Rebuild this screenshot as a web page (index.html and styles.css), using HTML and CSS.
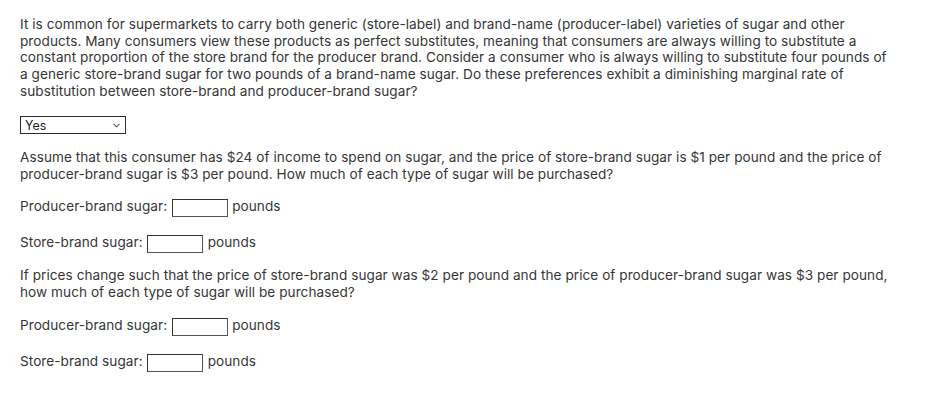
FILE: index.html
```html
<!DOCTYPE html>
<html lang="en">
<head>
<meta charset="utf-8">
<title>Sugar substitution question</title>
<link rel="stylesheet" href="styles.css">
</head>
<body>
<main class="question">
  <p class="para">It is common for supermarkets to carry both generic (store-label) and brand-name (producer-label) varieties of sugar and other<br>products. Many consumers view these products as perfect substitutes, meaning that consumers are always willing to substitute a<br>constant proportion of the store brand for the producer brand. Consider a consumer who is always willing to substitute four pounds of<br>a generic store-brand sugar for two pounds of a brand-name sugar. Do these preferences exhibit a diminishing marginal rate of<br>substitution between store-brand and producer-brand sugar?</p>

  <div class="dropdown">
    <span class="dropdown-value">Yes</span>
    <svg class="chevron" width="7" height="5" viewBox="0 0 7 5"><path d="M0.5 0.8 L3.5 3.8 L6.5 0.8" fill="none" stroke="#555" stroke-width="1.1"/></svg>
  </div>

  <p class="para para-gap">Assume that this consumer has $24 of income to spend on sugar, and the price of store-brand sugar is $1 per pound and the price of<br>producer-brand sugar is $3 per pound. How much of each type of sugar will be purchased?</p>

  <div class="row">
    <span class="label">Producer-brand sugar:</span>
    <span class="field"></span>
    <span class="label">pounds</span>
  </div>
  <div class="row">
    <span class="label">Store-brand sugar:</span>
    <span class="field"></span>
    <span class="label">pounds</span>
  </div>

  <p class="para para-gap">If prices change such that the price of store-brand sugar was $2 per pound and the price of producer-brand sugar was $3 per pound,<br>how much of each type of sugar will be purchased?</p>

  <div class="row row-after-para">
    <span class="label">Producer-brand sugar:</span>
    <span class="field"></span>
    <span class="label">pounds</span>
  </div>
  <div class="row">
    <span class="label">Store-brand sugar:</span>
    <span class="field"></span>
    <span class="label">pounds</span>
  </div>
</main>
</body>
</html>
```
FILE: styles.css
```css
html, body {
  margin: 0;
  padding: 0;
  background: #ffffff;
}

body {
  font-family: Inter, "Open Sans", sans-serif;
  font-size: 13.6px;
  letter-spacing: 0.05px;
  color: #363636;
}

.question {
  padding: 16px 20px 20px 20px;
}

.para {
  margin: 0;
  line-height: 16.67px;
  white-space: nowrap;
}

.para-gap {
  margin-top: 14.7px;
}

.dropdown {
  margin-top: 17px;
  width: 106px;
  height: 18px;
  box-sizing: border-box;
  border: 1px solid #2b2b2b;
  display: flex;
  align-items: center;
  justify-content: space-between;
  padding: 0 5px 0 4px;
}

.dropdown-value {
  font-size: 12.4px;
  line-height: 15px;
  letter-spacing: 0;
  color: #222222;
}

.chevron {
  display: block;
  margin-top: 1px;
}

.row {
  margin-top: 17.1px;
  display: flex;
  align-items: flex-start;
  gap: 4.5px;
  height: 18px;
}

.row-after-para {
  margin-top: 17.8px;
}

.label {
  line-height: 14px;
  white-space: nowrap;
}

.field {
  width: 56px;
  height: 18px;
  box-sizing: border-box;
  border: 1px solid #555555;
  border-top-color: #333333;
  border-left-color: #333333;
  background: #ffffff;
}
```
